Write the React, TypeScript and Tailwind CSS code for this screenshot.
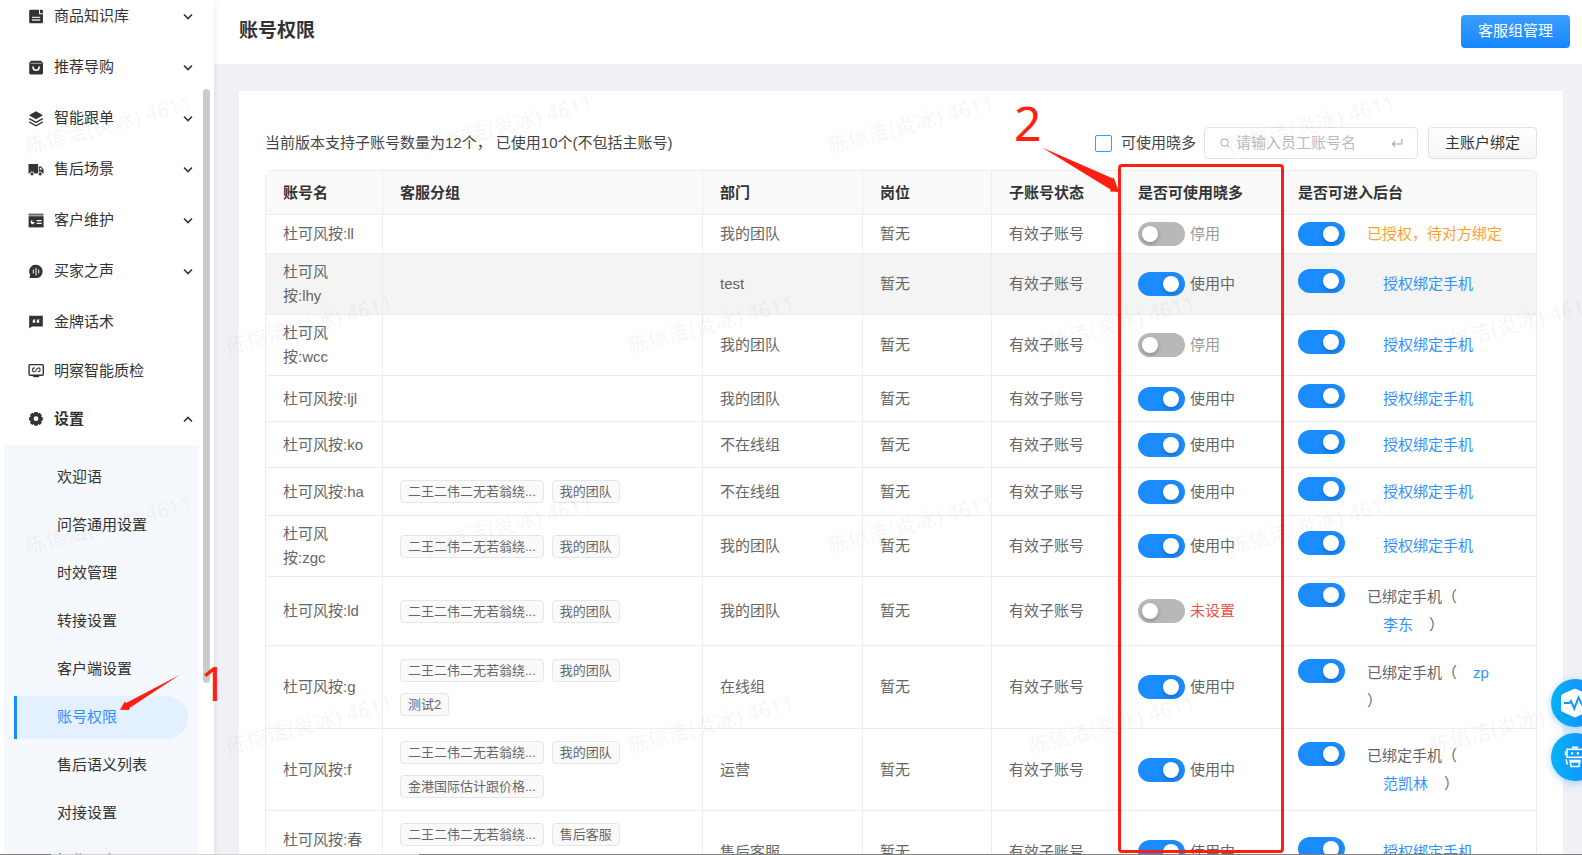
import React, { useState } from 'react';

const chevronDown = 'M1 1.5l4 4 4-4';
const chevronUp = 'M1 5.5l4-4 4 4';

function Icon({ children }: { children: React.ReactNode }) {
  return (
    <svg viewBox="0 0 16 16" className="w-4 h-4 shrink-0 text-[#333]" fill="currentColor" aria-hidden="true">
      {children}
    </svg>
  );
}

const menu = [
  {
    label: '商品知识库',
    icon: (
      <Icon>
        <path d="M2.5 .8H11v4.400h4v7.800a1.300 1.300 0 0 1-1.300 1.300H2.500a1.300 1.300 0 0 1-1.300-1.300V2.100A1.300 1.300 0 0 1 2.500.800z" />
        <path d="M11.900.800h1.800A1.300 1.300 0 0 1 15 2.100v2.200h-3.100z" />
        <path d="M4 8.400h8.200M4 11h8.200" stroke="#ddd" strokeWidth="1.3" />
      </Icon>
    ),
  },
  {
    label: '推荐导购',
    icon: (
      <Icon>
        <path d="M3 .8h10l2 2.300v10a1.300 1.300 0 0 1-1.300 1.300H2.500a1.300 1.300 0 0 1-1.300-1.300v-10z" />
        <path d="M2.600 3.300h11" stroke="#aaa" strokeWidth="1" />
        <path d="M5 6.500c0 5 6.200 5 6.200 0" fill="none" stroke="#fff" strokeWidth="1.6" />
      </Icon>
    ),
  },
  {
    label: '智能跟单',
    icon: (
      <Icon>
        <path d="M8 .3l7 4-7 4-7-4z" />
        <path d="M1.200 7.600L8 11.400l6.800-3.800M1.200 10.900L8 14.700l6.800-3.800" fill="none" stroke="currentColor" strokeWidth="1.3" />
      </Icon>
    ),
  },
  {
    label: '售后场景',
    icon: (
      <Icon>
        <path d="M.500 2h9.600v9.500H.500zM10.800 4.600h2.400L15.600 7.600v3.900h-4.800z" />
        <path d="M11.800 5.800h1l1.500 1.900h-2.500z" fill="#fff" />
        <circle cx="4" cy="11.900" r="2" stroke="#fff" strokeWidth=".9" />
        <circle cx="12.200" cy="11.900" r="2" stroke="#fff" strokeWidth=".9" />
      </Icon>
    ),
  },
  {
    label: '客户维护',
    icon: (
      <Icon>
        <path d="M.600.600h15v2H.600z" opacity=".75" />
        <path d="M.600 3.200h15v11.200H.600z" />
        <path d="M2.600 9c0-1.100.800-1.700 1.700-1.700V9h2.300c0 1.400-1 2.200-2 2.200s-2-.900-2-2.200zM8.600 6.900h5v1.400h-5zM8.600 9.700h5v1.400h-5z" fill="#fff" />
      </Icon>
    ),
  },
  {
    label: '买家之声',
    icon: (
      <Icon>
        <path d="M8 .8a6.600 6.600 0 1 1 0 13.300H1.400l.900-3A6.600 6.600 0 0 1 8 .800z" />
        <path d="M5.400 5.600v4M8 3.800v7.600M10.600 5.600v4" stroke="#ccc" strokeWidth="1.300" />
      </Icon>
    ),
  },
  {
    label: '金牌话术',
    icon: (
      <Icon>
        <path d="M1.200 1.700h13.600v10.800H4L1.200 14.500z" />
        <path d="M7.400 4.900C5.600 5.100 4.600 6.100 4.600 7.500A1.400 1.400 0 1 0 6.100 6.100c.1-.4.600-.7 1.300-.7zM11.400 4.900C9.600 5.100 8.600 6.100 8.600 7.500a1.400 1.400 0 1 0 1.500-1.400c.1-.4.600-.7 1.300-.7z" fill="#fff" />
      </Icon>
    ),
    plain: true,
  },
];

const qualityIcon = (
  <Icon>
    <path d="M2 1.600h12.400a.9.9 0 0 1 .9.900v8.800a.9.9 0 0 1-.9.900H2a.9.9 0 0 1-.9-.9V2.500A.9.9 0 0 1 2 1.600z" fill="none" stroke="currentColor" strokeWidth="1.4" />
    <path d="M5.200 12.200h6v2h-6z" />
    <path d="M6.900 4.900C4.700 5 4 6.400 4.600 7.800c.7 1.500 2.600 1.300 3.400-.2l.7-1.500c.8-1.500 2.700-1.600 3.300-.1.500 1.400-.2 2.700-2.300 2.800" fill="none" stroke="currentColor" strokeWidth="1.1" />
  </Icon>
);

const gearIcon = (
  <Icon>
    <path
      fillRule="evenodd"
      d="M6.400.900h3.200l.5 1.600 1.600-.7 2.100 2.200-.7 1.600 1.700.6v3.300l-1.700.6.800 1.600-2.200 2.200-1.600-.8-.6 1.700H6.400l-.5-1.700-1.700.8L2 11.700l.8-1.600-1.700-.6V6.200l1.700-.6L2 4l2.200-2.200 1.700.7zM8 5.300a2.400 2.400 0 1 0 0 4.800 2.400 2.400 0 0 0 0-4.800z"
    />
  </Icon>
);

const settings = ['欢迎语', '问答通用设置', '时效管理', '转接设置', '客户端设置', '账号权限', '售后语义列表', '对接设置', '操作日志'];

const columns = ['账号名', '客服分组', '部门', '岗位', '子账号状态', '是否可使用晓多', '是否可进入后台'];

const LONG = '二王二伟二无若翁绕...';
const TEAM = '我的团队';

type Row = {
  name: string[];
  tags?: string[][];
  dept: string;
  use: '停用' | '使用中' | '未设置';
  height: string;
  pending?: boolean;
  phone?: string;
  inline?: boolean;
};

const rows: Row[] = [
  { name: ['杜可风按:ll'], dept: TEAM, use: '停用', height: 'h-[39px]', pending: true },
  { name: ['杜可风', '按:lhy'], dept: 'test', use: '使用中', height: 'h-[61px]' },
  { name: ['杜可风', '按:wcc'], dept: TEAM, use: '停用', height: 'h-[61px]' },
  { name: ['杜可风按:ljl'], dept: TEAM, use: '使用中', height: 'h-[46px]' },
  { name: ['杜可风按:ko'], dept: '不在线组', use: '使用中', height: 'h-[46px]' },
  { name: ['杜可风按:ha'], tags: [[LONG, TEAM]], dept: '不在线组', use: '使用中', height: 'h-12' },
  { name: ['杜可风', '按:zgc'], tags: [[LONG, TEAM]], dept: TEAM, use: '使用中', height: 'h-[61px]' },
  { name: ['杜可风按:ld'], tags: [[LONG, TEAM]], dept: TEAM, use: '未设置', height: 'h-[69px]', phone: '李东' },
  { name: ['杜可风按:g'], tags: [[LONG, TEAM], ['测试2']], dept: '在线组', use: '使用中', height: 'h-[83px]', phone: 'zp', inline: true },
  { name: ['杜可风按:f'], tags: [[LONG, TEAM], ['金港国际估计跟价格...']], dept: '运营', use: '使用中', height: 'h-[82px]', phone: '范凯林' },
  { name: ['杜可风按:春', '天'], tags: [[LONG, '售后客服'], [TEAM]], dept: '售后客服', use: '使用中', height: 'h-[82px]' },
];

const useColors = {
  停用: 'text-[#999]',
  使用中: 'text-[#666]',
  未设置: 'text-[#f5504e]',
};

function Switch({ initial, label }: { initial: boolean; label: string }) {
  const [on, setOn] = useState(initial);
  return (
    <button
      type="button"
      role="switch"
      aria-checked={on}
      aria-label={label}
      onClick={() => setOn(!on)}
      className={`flex items-center w-[47px] h-6 shrink-0 rounded-full px-1 ${on ? 'bg-[#1a8cff] justify-end pr-1.5' : 'bg-[#b8b8b8]'}`}
    >
      <span className="w-4 h-4 rounded-full bg-white shadow-[0_2px_4px_rgba(0,0,0,0.25)]"></span>
    </button>
  );
}

function Backend({ row }: { row: Row }) {
  const link = 'text-[#3390ff] px-4';
  if (row.pending) {
    return <span className="text-[#ff9f2e]">已授权，待对方绑定</span>;
  }
  if (!row.phone) {
    return <a href="#bind" className={`${link} leading-[30px]`}>授权绑定手机</a>;
  }
  return (
    <span className="leading-7 whitespace-nowrap">
      已绑定手机（
      {!row.inline && <br />}
      <a href="#phone" className={link}>{row.phone}</a>
      {row.inline && <br />}）
    </span>
  );
}

function Sidebar() {
  return (
    <aside className="relative z-10 w-[214px] shrink-0 overflow-hidden bg-white shadow-[0_0_6px_rgba(0,0,0,0.1)]">
      <nav className="-mt-[9px] text-[15px] text-[#333]">
        {menu.map((item) => (
          <a
            key={item.label}
            href="#menu"
            className={`flex items-center pl-7 pr-[21px] ${item.plain ? 'h-[50px]' : 'h-[51px]'}`}
          >
            {item.icon}
            <span className="ml-2.5 flex-1">{item.label}</span>
            {!item.plain && (
              <svg viewBox="0 0 10 7" className="w-2.5 h-[7px]" fill="none" stroke="#333" strokeWidth="1.6" aria-hidden="true">
                <path d={chevronDown} />
              </svg>
            )}
          </a>
        ))}
        <a href="#quality" className="flex items-center h-12 pl-7">
          {qualityIcon}
          <span className="ml-2.5">明察智能质检</span>
        </a>
        <a href="#settings" className="flex items-center h-12 pl-7 pr-[21px] font-bold">
          {gearIcon}
          <span className="ml-2.5 flex-1">设置</span>
          <svg viewBox="0 0 10 7" className="w-2.5 h-[7px]" fill="none" stroke="#333" strokeWidth="1.6" aria-hidden="true">
            <path d={chevronUp} />
          </svg>
        </a>

        <div className="mt-0.5 ml-1 mr-[15px] pt-2 pl-2.5 pr-[11px] bg-[#f5f9fd]">
          {settings.map((label) => {
            const active = label === '账号权限';
            return (
              <div key={label} className="flex items-center h-12">
                <a
                  href="#setting"
                  className={`flex items-center flex-1 h-[43px] pl-10 border-l-[3px] ${
                    active ? 'border-[#1a8cff] bg-[#e2f0ff] text-[#2f8fff] rounded-r-full' : 'border-transparent'
                  }`}
                >
                  {label}
                </a>
              </div>
            );
          })}
        </div>
      </nav>

      {/* Scrollbar thumb */}
      <div className="absolute top-[89px] right-1 w-[7px] h-[594px] rounded-full bg-[#cbcbcb]"></div>
    </aside>
  );
}

function AccountTable() {
  return (
    <table className="mt-[11px] w-full table-fixed border-separate border-spacing-0 text-[15px] leading-6 text-[#666] rounded-md border-t border-r border-[#ededed] overflow-hidden">
      <colgroup>
        <col className="w-[117px]" />
        <col />
        <col className="w-40" />
        <col className="w-[129px]" />
        <col className="w-[129px]" />
        <col className="w-40" />
        <col className="w-64" />
      </colgroup>
      <thead>
        <tr className="h-11 bg-[#fafafa] text-left text-[#333]">
          {columns.map((c, i) => (
            <th key={c} className={`font-bold border-b border-[#ededed] ${i < 6 ? 'pl-[17px] border-l' : 'pl-[18px]'}`}>
              {c}
            </th>
          ))}
        </tr>
      </thead>
      <tbody>
        {rows.map((row, i) => {
          const cell = 'pl-[17px] border-b border-l border-[#ededed]';
          return (
            <tr key={row.name.join('')} className={`${row.height} ${i === 1 ? 'bg-[#f4f4f4]' : ''}`}>
              <td className={cell}>
                {row.name.map((line) => (
                  <div key={line} className="whitespace-nowrap">{line}</div>
                ))}
              </td>
              <td className={cell}>
                <div className="flex flex-col gap-[11px]">
                  {row.tags?.map((line) => (
                    <div key={line.join('')} className="flex gap-2">
                      {line.map((tag) => (
                        <span
                          key={tag}
                          className="h-[23px] px-[7px] text-[13px] leading-[21px] whitespace-nowrap border border-[#e6e6e6] rounded-sm bg-[#fafafa]"
                        >
                          {tag}
                        </span>
                      ))}
                    </div>
                  ))}
                </div>
              </td>
              <td className={cell}>{row.dept}</td>
              <td className={cell}>暂无</td>
              <td className={cell}>有效子账号</td>
              <td className={cell}>
                <div className={`flex items-center gap-[5px] ${useColors[row.use]}`}>
                  <Switch initial={row.use === '使用中'} label="是否可使用晓多" />
                  {row.use}
                </div>
              </td>
              <td className="pl-[18px] border-b border-[#ededed]">
                <div className="flex items-start gap-[22px]">
                  <Switch initial label="是否可进入后台" />
                  <Backend row={row} />
                </div>
              </td>
            </tr>
          );
        })}
      </tbody>
    </table>
  );
}

function Watermark() {
  return (
    <div className="absolute inset-0 z-30 overflow-hidden pointer-events-none select-none pt-[25px]" aria-hidden="true">
      {[0, 1, 2, 3].map((r) => (
        <div key={r} className={`flex h-[200px] ${r % 2 ? 'ml-[109px]' : 'ml-[-92px]'}`}>
          {[0, 1, 2, 3].map((c) => (
            <div key={c} className="flex w-[401px] shrink-0 items-center justify-center">
              <span className="-rotate-[15deg] text-[21px] font-medium text-black/5 whitespace-nowrap font-['Noto_Sans','Noto_Sans_CJK_SC',sans-serif]">
                陈信洁(炎冰) 4611
              </span>
            </div>
          ))}
        </div>
      ))}
    </div>
  );
}

function FloatingButtons() {
  const round =
    'flex items-center justify-center w-12 h-12 rounded-full bg-linear-to-r from-[#06b3f6] to-[#1a86ff] shadow-[0_2px_8px_rgba(26,140,255,0.35)]';
  return (
    <div className="absolute z-20 top-[679px] -right-[17px] flex flex-col gap-1.5">
      <button type="button" aria-label="监控" className={round}>
        <svg viewBox="0 0 30 30" className="w-[30px] h-[30px]" aria-hidden="true">
          <path d="M13.200 1.200a3.600 3.600 0 0 1 3.600 0l9.800 4.800a3 3 0 0 1 1.800 2.700v12.600a3 3 0 0 1-1.800 2.700l-9.800 4.800a3.600 3.600 0 0 1-3.600 0L2.800 24A3 3 0 0 1 1 21.300V8.700A3 3 0 0 1 2.800 6z" fill="#fff" />
          <path d="M4 15h5.500l1.500-2 3.300 7.500L18.500 9.500l4 8 1.500-2.500h3" fill="none" stroke="#1398fb" strokeWidth="2" />
        </svg>
      </button>
      <button type="button" aria-label="机器人" className={round}>
        <svg viewBox="0 0 24 24" className="w-6 h-6" fill="none" stroke="#fff" strokeWidth="1.6" aria-hidden="true">
          <path d="M9 2.500h6" strokeWidth="2" />
          <rect x="4" y="4.300" width="16" height="8" />
          <path d="M2.500 6.500v4M21.500 6.500v4M3.200 14.500l1 5M20.800 14.500l-1 5" />
          <path d="M7 15.500h10l-1 6H8z" />
          <path d="M8 16.500h8" strokeWidth="2.4" />
          <path d="M8 8.300h2.200M13.800 8.300H16" strokeWidth="2.200" />
        </svg>
      </button>
    </div>
  );
}

function Annotations() {
  return (
    <div className="absolute inset-0 z-20 pointer-events-none text-[#ff1f12] text-[48px] leading-none font-['Noto_Sans',sans-serif]">
      <div className="absolute top-[164px] left-[1118px] w-[166px] h-[689px] border-[3px] border-[#ff1f12] rounded"></div>
      <span className="absolute top-[659px] left-[200px]">1</span>
      <span className="absolute top-[99px] left-[1014px]">2</span>
      <svg className="absolute top-[670px] left-[116px] w-[68px] h-[46px]" viewBox="0 0 68 46" fill="currentColor">
        <path d="M63.500 5L13.500 38l-.5 2-9-.2 4.500-8 1.500 1.200z" />
      </svg>
      <svg className="absolute top-36 left-[1038px] w-[84px] h-[52px]" viewBox="0 0 84 52" fill="currentColor">
        <path d="M4 3.500L75 34.500l.5-1.500 5.500 15-9-.5.5-2z" />
      </svg>
    </div>
  );
}

export default function App() {
  return (
    <div className="relative flex h-screen overflow-hidden bg-[#f0f1f6] font-['Liberation_Sans','Noto_Sans_CJK_SC',sans-serif]">
      <Sidebar />

      <main className="flex-1 min-w-0">
        <header className="flex items-center justify-between h-16 pl-[25px] pr-3 pb-0.5 bg-white">
          <h1 className="text-[19px] font-bold text-[#333]">账号权限</h1>
          <button type="button" className="h-[33px] px-[17px] rounded bg-linear-to-b from-[#3b9dff] to-[#1287ff] text-[15px] text-white">
            客服组管理
          </button>
        </header>

        <section className="mt-[27px] ml-[25px] mr-[19px] px-[26px] pt-9 bg-white">
          <div className="flex items-center h-8 text-[15px] text-[#444]">
            <p className="flex-1 whitespace-pre">当前版本支持子账号数量为12个， 已使用10个(不包括主账号)</p>
            <label className="flex items-center gap-[9px]">
              <input type="checkbox" className="appearance-none w-[17px] h-[17px] rounded-xs border border-[#3b98ff] bg-white checked:bg-[#1a8cff]" />
              可使用晓多
            </label>
            <div className="flex items-center ml-2 w-[214px] h-8 pl-[15px] pr-3.5 border border-[#e2e2e2] rounded">
              <svg viewBox="0 0 10 10" className="w-2.5 h-2.5 shrink-0" fill="none" stroke="#aaa" aria-hidden="true">
                <circle cx="4.500" cy="4.500" r="3.700" />
                <path d="M7.200 7.200L9.500 9.500" />
              </svg>
              <input
                type="text"
                aria-label="员工账号名"
                placeholder="请输入员工账号名"
                className="flex-1 min-w-0 ml-1.5 outline-none placeholder:text-[#bbb]"
              />
              <svg viewBox="0 0 12 10" className="w-3 h-2.5 shrink-0" fill="none" stroke="#aaa" strokeWidth="1.2" aria-hidden="true">
                <path d="M10.800 1v5H1.500M4 3.500L1.500 6 4 8.500" />
              </svg>
            </div>
            <button type="button" className="ml-2.5 h-8 px-4 border border-[#e2e2e2] rounded bg-linear-to-b from-white to-[#f7f7f7] text-[#333]">
              主账户绑定
            </button>
          </div>

          <AccountTable />
        </section>
      </main>

      <FloatingButtons />
      <Annotations />
      <Watermark />

      {/* Window edge */}
      <div className="absolute inset-x-0 bottom-0 z-40 flex h-px">
        <div className="w-[51px] bg-[#808080]"></div>
        <div className="w-[368px] bg-[#d4d4d4]"></div>
        <div className="flex-1 bg-[#808080]"></div>
      </div>
    </div>
  );
}
